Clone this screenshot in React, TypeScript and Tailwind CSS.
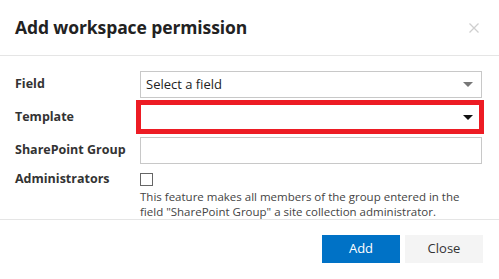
import React from 'react'

const FONT = { fontFamily: '"Open Sans", "Liberation Sans", sans-serif' }

function Arrow({ color }: { color: string }) {
  return (
    <svg width="10" height="5" viewBox="0 0 10 5" className="shrink-0">
      <path d="M0 0 L10 0 L5 5 Z" fill={color} />
    </svg>
  )
}

function Row({ label, children }: { label: string; children: React.ReactNode }) {
  return (
    <div className="flex items-center">
      <div className="w-[125px] text-[12.5px] font-bold text-[#333]">{label}</div>
      {children}
    </div>
  )
}

export default function App() {
  return (
    <div className="w-[499px] h-[279px] bg-white text-[#333] overflow-hidden" style={FONT}>
      <header className="h-[56px] flex items-center justify-between pl-[15px] pr-[20px] border-b border-[#e5e5e5]">
        <h1 className="text-[17.5px] font-bold text-[#222] tracking-[-0.1px]">Add workspace permission</h1>
        <svg width="10" height="10" viewBox="0 0 10 10">
          <path d="M0.5 0.5 L9.5 9.5 M9.5 0.5 L0.5 9.5" stroke="#cfcfcf" strokeWidth="1.3" />
        </svg>
      </header>

      <div className="pt-[15px] pl-[15px] pr-[17px] h-[164px] border-b border-[#e5e5e5] flex flex-col gap-[6px]">
        <Row label="Field">
          <div className="flex-1 h-[27px] border border-[#c8c8c8] flex items-center justify-between pl-[5px] pr-[8px] text-[13px] text-[#222]">
            <span>Select a field</span>
            <Arrow color="#777" />
          </div>
        </Row>
        <Row label="Template">
          <div className="relative flex-1 h-[27px] border border-[#c8c8c8] flex items-center justify-end pr-[8px]">
            <Arrow color="#111" />
            <div className="absolute -left-[5px] -right-[3px] -top-[5px] -bottom-[4px] border-[5px] border-[#ed1c24]" />
          </div>
        </Row>
        <Row label="SharePoint Group">
          <div className="flex-1 h-[27px] border border-[#c8c8c8]" />
        </Row>
        <div className="flex">
          <div className="w-[125px] mt-[2px] text-[12.5px] font-bold text-[#333] leading-[14px]">Administrators</div>
          <div className="flex-1">
            <div className="mt-[3px] w-[13px] h-[13px] border border-[#666] bg-white" />
            <p className="mt-[3px] text-[11.5px] leading-[15px] text-[#444]">
              This feature makes all members of the group entered in the
              <br />
              field "SharePoint Group" a site collection administrator.
            </p>
          </div>
        </div>
      </div>

      <footer className="flex justify-end gap-[5px] pt-[15px] pr-[16px]">
        <button className="w-[78px] h-[28px] bg-[#0072c6] text-white text-[13px]">Add</button>
        <button className="w-[78px] h-[28px] bg-[#f4f4f4] text-[#333] text-[13px]">Close</button>
      </footer>
    </div>
  )
}
